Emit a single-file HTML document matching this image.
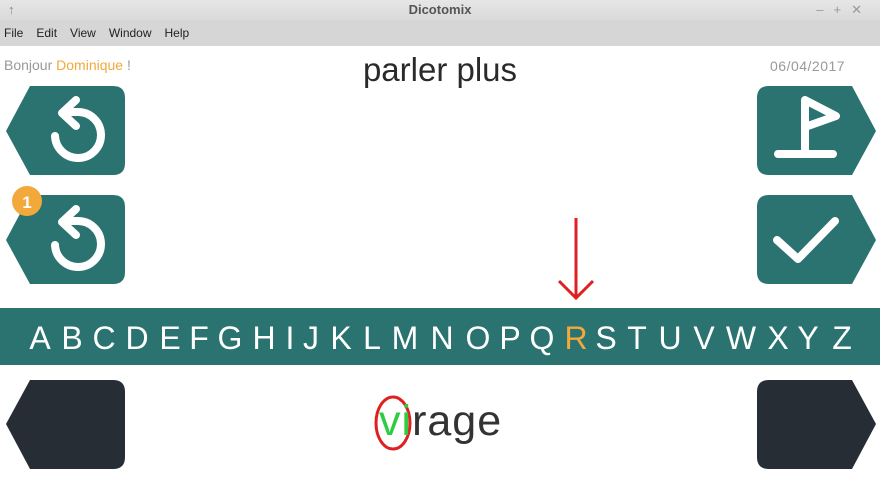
<!DOCTYPE html><html><head><meta charset="utf-8"><style>
body{margin:0;width:880px;height:480px;overflow:hidden;background:#fff;font-family:"Liberation Sans",sans-serif;position:relative}
.tb{position:absolute;left:0;top:0;width:880px;height:20px;background:linear-gradient(#e6e6e6,#dadada);text-align:center;font-size:13px;font-weight:bold;color:#555;line-height:20px}
.mb{position:absolute;left:0;top:20px;width:880px;height:26px;background:#d6d6d6;font-size:12px;color:#222;line-height:26px}
.mb span{margin-left:4px;margin-right:9px}
.a{position:absolute}
.L{position:absolute;top:322px;font-size:32px;color:#fff;transform:translateX(-50%);line-height:1}
</style></head><body>
<div class="tb">Dicotomix<span class="a" style="left:8px;top:0;color:#888;font-weight:normal">↑</span><span class="a" style="right:8px;top:0;color:#999;font-weight:normal;letter-spacing:10px">–+✕</span></div>
<div class="mb"><span>File</span><span>Edit</span><span>View</span><span>Window</span><span>Help</span></div>
<div class="a" style="left:4px;top:57px;font-size:14px;color:#999">Bonjour <span style="color:#f2a83a">Dominique</span> !</div>
<div class="a" style="left:0;width:880px;top:51px;text-align:center;font-size:33px;color:#2a2a2a">parler plus</div>
<div class="a" style="left:770px;top:58px;font-size:14px;color:#999;letter-spacing:0.5px">06/04/2017</div>
<svg class="a" style="left:0;top:0" width="880" height="480">
<g fill="#2a7370">
<path d="M30 86H113Q125 86 125 98V163Q125 175 113 175H30L6 131Z"/>
<path d="M30 195H113Q125 195 125 207V272Q125 284 113 284H30L6 240Z"/>
<path d="M769 86H852L876 131L852 175H769Q757 175 757 163V98Q757 86 769 86Z"/>
<path d="M769 195H852L876 240L852 284H769Q757 284 757 272V207Q757 195 769 195Z"/>
</g>
<g fill="#262d35">
<path d="M30 380H113Q125 380 125 392V457Q125 469 113 469H30L6 424Z"/>
<path d="M769 380H852L876 424L852 469H769Q757 469 757 457V392Q757 380 769 380Z"/>
</g>
<g fill="none" stroke="#fff" stroke-width="8" stroke-linecap="round" stroke-linejoin="round">
<path d="M64 112H77A23 23 0 1 1 55 136"/><path d="M76 100L62 113L76 126"/>
<path d="M64 221H77A23 23 0 1 1 55 245"/><path d="M76 209L62 222L76 235"/>
<path d="M778 154H833M805 154V100L836 116L805 127"/>
<path d="M777 240L798 259L835 221"/>
</g>
<rect x="0" y="308" width="880" height="57" fill="#2a7370"/>
<circle cx="27" cy="201" r="15" fill="#f2a83a"/>
<text x="27" y="208" fill="#fff" font-size="17" font-weight="bold" text-anchor="middle" font-family="Liberation Sans">1</text>
<g stroke="#e02020" stroke-width="3" fill="none"><path d="M576 218V298M559 281L576 298L593 281"/><ellipse cx="393" cy="423" rx="17" ry="26"/></g>
</svg>
<div class="a" style="left:379px;top:400px;font-size:43px;color:#333;line-height:1;letter-spacing:1px"><span style="color:#2ecc40">vi</span>rage</div>
<span class="L" style="left:40px">A</span><span class="L" style="left:72px">B</span><span class="L" style="left:104px">C</span><span class="L" style="left:137px">D</span><span class="L" style="left:170px">E</span><span class="L" style="left:199px">F</span><span class="L" style="left:230px">G</span><span class="L" style="left:264px">H</span><span class="L" style="left:290px">I</span><span class="L" style="left:311px">J</span><span class="L" style="left:341px">K</span><span class="L" style="left:372px">L</span><span class="L" style="left:405px">M</span><span class="L" style="left:442px">N</span><span class="L" style="left:478px">O</span><span class="L" style="left:510px">P</span><span class="L" style="left:542px">Q</span><span class="L" style="left:576px;color:#f2a83a">R</span><span class="L" style="left:606px">S</span><span class="L" style="left:637px">T</span><span class="L" style="left:670px">U</span><span class="L" style="left:704px">V</span><span class="L" style="left:741px">W</span><span class="L" style="left:778px">X</span><span class="L" style="left:808px">Y</span><span class="L" style="left:842px">Z</span>
</body></html>
